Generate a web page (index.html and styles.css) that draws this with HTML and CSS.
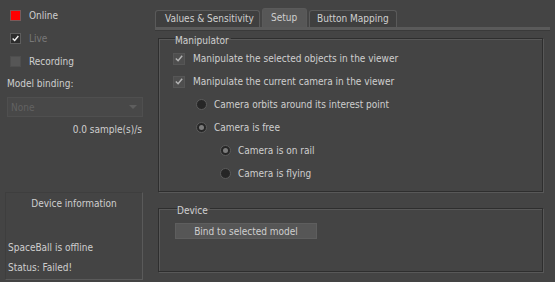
FILE: index.html
```html
<!DOCTYPE html>
<html lang="en">
<head>
    <meta charset="UTF-8">
    <title>SpaceBall Device</title>
    <link rel="stylesheet" href="styles.css">
</head>
<body>
    <div class="device-page">
        <div class="side-panel">
            <div class="check-row">
                <span class="box box-online"></span>
                <span>Online</span>
            </div>
            <div class="check-row disabled">
                <span class="box box-live">
                    <svg width="11" height="11" viewBox="0 0 11 11"><path d="M2 5.5 L4.5 8 L9 2.5" fill="none" stroke="#f2f2f2" stroke-width="1.7"/></svg>
                </span>
                <span>Live</span>
            </div>
            <div class="check-row">
                <span class="box box-recording"></span>
                <span>Recording</span>
            </div>
            <div class="side-label">Model binding:</div>
            <div class="combo">
                <span>None</span>
                <span class="combo-arrow"></span>
            </div>
            <div class="rate">0.0 sample(s)/s</div>

            <div class="info-box">
                <div class="info-title">Device information</div>
                <div class="info-line first">SpaceBall is offline</div>
                <div class="info-line">Status: Failed!</div>
            </div>
        </div>

        <div class="main-panel">
            <div class="tab-bar">
                <div class="tab tab-values">Values &amp; Sensitivity</div>
                <div class="tab tab-setup tab-active">Setup</div>
                <div class="tab tab-buttons">Button Mapping</div>
            </div>
            <div class="tab-line"></div>

            <fieldset class="group group-manipulator">
                <legend>Manipulator</legend>
                <div class="opt-row">
                    <span class="box box-check">
                        <svg width="11" height="11" viewBox="0 0 11 11"><path d="M2 5.5 L4.5 8 L9 2.5" fill="none" stroke="#b4b4b4" stroke-width="1.6"/></svg>
                    </span>
                    <span>Manipulate the selected objects in the viewer</span>
                </div>
                <div class="opt-row">
                    <span class="box box-check">
                        <svg width="11" height="11" viewBox="0 0 11 11"><path d="M2 5.5 L4.5 8 L9 2.5" fill="none" stroke="#b4b4b4" stroke-width="1.6"/></svg>
                    </span>
                    <span>Manipulate the current camera in the viewer</span>
                </div>
                <div class="opt-row level-1">
                    <span class="radio"></span>
                    <span>Camera orbits around its interest point</span>
                </div>
                <div class="opt-row level-1">
                    <span class="radio radio-on"></span>
                    <span>Camera is free</span>
                </div>
                <div class="opt-row level-2">
                    <span class="radio radio-on"></span>
                    <span>Camera is on rail</span>
                </div>
                <div class="opt-row level-2">
                    <span class="radio"></span>
                    <span>Camera is flying</span>
                </div>
            </fieldset>

            <fieldset class="group group-device">
                <legend>Device</legend>
                <button class="bind-btn">Bind to selected model</button>
            </fieldset>
        </div>
    </div>
</body>
</html>
```

FILE: styles.css
```css
body {
    margin: 0;
    background-color: #444444;
    color: #cfcfcf;
    font-family: "DejaVu Sans Condensed", "DejaVu Sans", sans-serif;
    font-stretch: condensed;
    font-size: 10px;
}
.device-page {
    display: flex;
    height: 282px;
}
.side-panel {
    width: 150px;
    display: flex;
    flex-direction: column;
    padding-top: 4px;
    box-sizing: border-box;
}
.check-row {
    height: 23px;
    display: flex;
    align-items: center;
    padding-left: 10px;
}
.check-row.disabled {
    color: #787878;
}
.box {
    width: 11px;
    height: 11px;
    box-sizing: border-box;
    margin-right: 8px;
    display: flex;
    align-items: center;
    justify-content: center;
}
.box-online {
    background-color: #ff0000;
    border: 1px solid #7a5a5a;
}
.box-live {
    background-color: #2c2c2c;
    border: 1px solid #5e5e5e;
}
.box-recording {
    background-color: #565656;
    border: 1px solid #4e4e4e;
}
.side-label {
    margin-top: 4px;
    padding-left: 7px;
    line-height: 14px;
}
.combo {
    margin: 6px 7px 0 7px;
    height: 20px;
    background-color: #484848;
    border: 1px solid #4f4f4f;
    box-sizing: border-box;
    color: #626262;
    display: flex;
    align-items: center;
    justify-content: space-between;
    padding: 0 5px 0 3px;
}
.combo-arrow {
    width: 0;
    height: 0;
    border-left: 4px solid transparent;
    border-right: 4px solid transparent;
    border-top: 4px solid #5e5e5e;
}
.rate {
    margin-top: 6px;
    padding-right: 8px;
    text-align: right;
    line-height: 14px;
}
.info-box {
    margin: auto 7px 2px 5px;
    height: 88px;
    border: 1px solid #3e3e3e;
    border-right-color: #5a5a5a;
    border-bottom-color: #5a5a5a;
    box-sizing: border-box;
    padding: 0 2px;
}
.info-title {
    text-align: center;
    margin-top: 4px;
    line-height: 14px;
}
.info-line {
    line-height: 14px;
    margin-top: 6px;
}
.info-line.first {
    margin-top: 30px;
}
.main-panel {
    width: 395px;
    margin-left: 5px;
    display: flex;
    flex-direction: column;
}
.tab-bar {
    display: flex;
    align-items: flex-end;
    height: 27px;
    gap: 2px;
}
.tab {
    height: 17px;
    line-height: 16px;
    padding-left: 9px;
    box-sizing: border-box;
    white-space: nowrap;
    background-color: #3f3f3f;
    border: 1px solid #5a5a5a;
    border-bottom: none;
    border-radius: 3px 3px 0 0;
    color: #cfcfcf;
}
.tab-values {
    width: 105px;
}
.tab-setup {
    width: 45px;
    padding-left: 8px;
}
.tab-buttons {
    width: 88px;
    padding-left: 7px;
}
.tab-active {
    height: 19px;
    line-height: 18px;
    background-color: #575757;
}
.tab-line {
    height: 3px;
    background-color: #5a5a5a;
    border-bottom: 1px solid #3a3a3a;
}
.group {
    margin: 0 7px 0 3px;
    padding: 0;
    border: 1px solid #2e2e2e;
    box-shadow: inset 1px 1px 0 #585858, 1px 1px 0 #585858;
}
.group legend {
    margin-left: 2px;
    padding: 6px 2px 0 0;
    line-height: 12px;
}
.group-manipulator {
    margin-top: -2px;
    padding: 0 0 6px 14px;
}
.group-device {
    margin-top: 7px;
    padding: 6px 0 32px 16px;
}
.opt-row {
    height: 23px;
    display: flex;
    align-items: center;
}
.box-check {
    width: 12px;
    height: 12px;
    background-color: #4e4e4e;
    border: 1px solid #565656;
}
.level-1 {
    padding-left: 23px;
}
.level-2 {
    padding-left: 47px;
}
.radio {
    width: 11px;
    height: 11px;
    box-sizing: border-box;
    border-radius: 50%;
    background-color: #262626;
    border: 1px solid #5c5c5c;
    margin-right: 7px;
    display: flex;
    align-items: center;
    justify-content: center;
}
.radio-on::after {
    content: "";
    width: 5px;
    height: 5px;
    border-radius: 50%;
    background-color: #7c7c7c;
}
.bind-btn {
    width: 142px;
    height: 16px;
    padding: 0;
    font: inherit;
    color: #cfcfcf;
    background-color: #565656;
    border: 1px solid #5e5e5e;
    display: block;
}
```
